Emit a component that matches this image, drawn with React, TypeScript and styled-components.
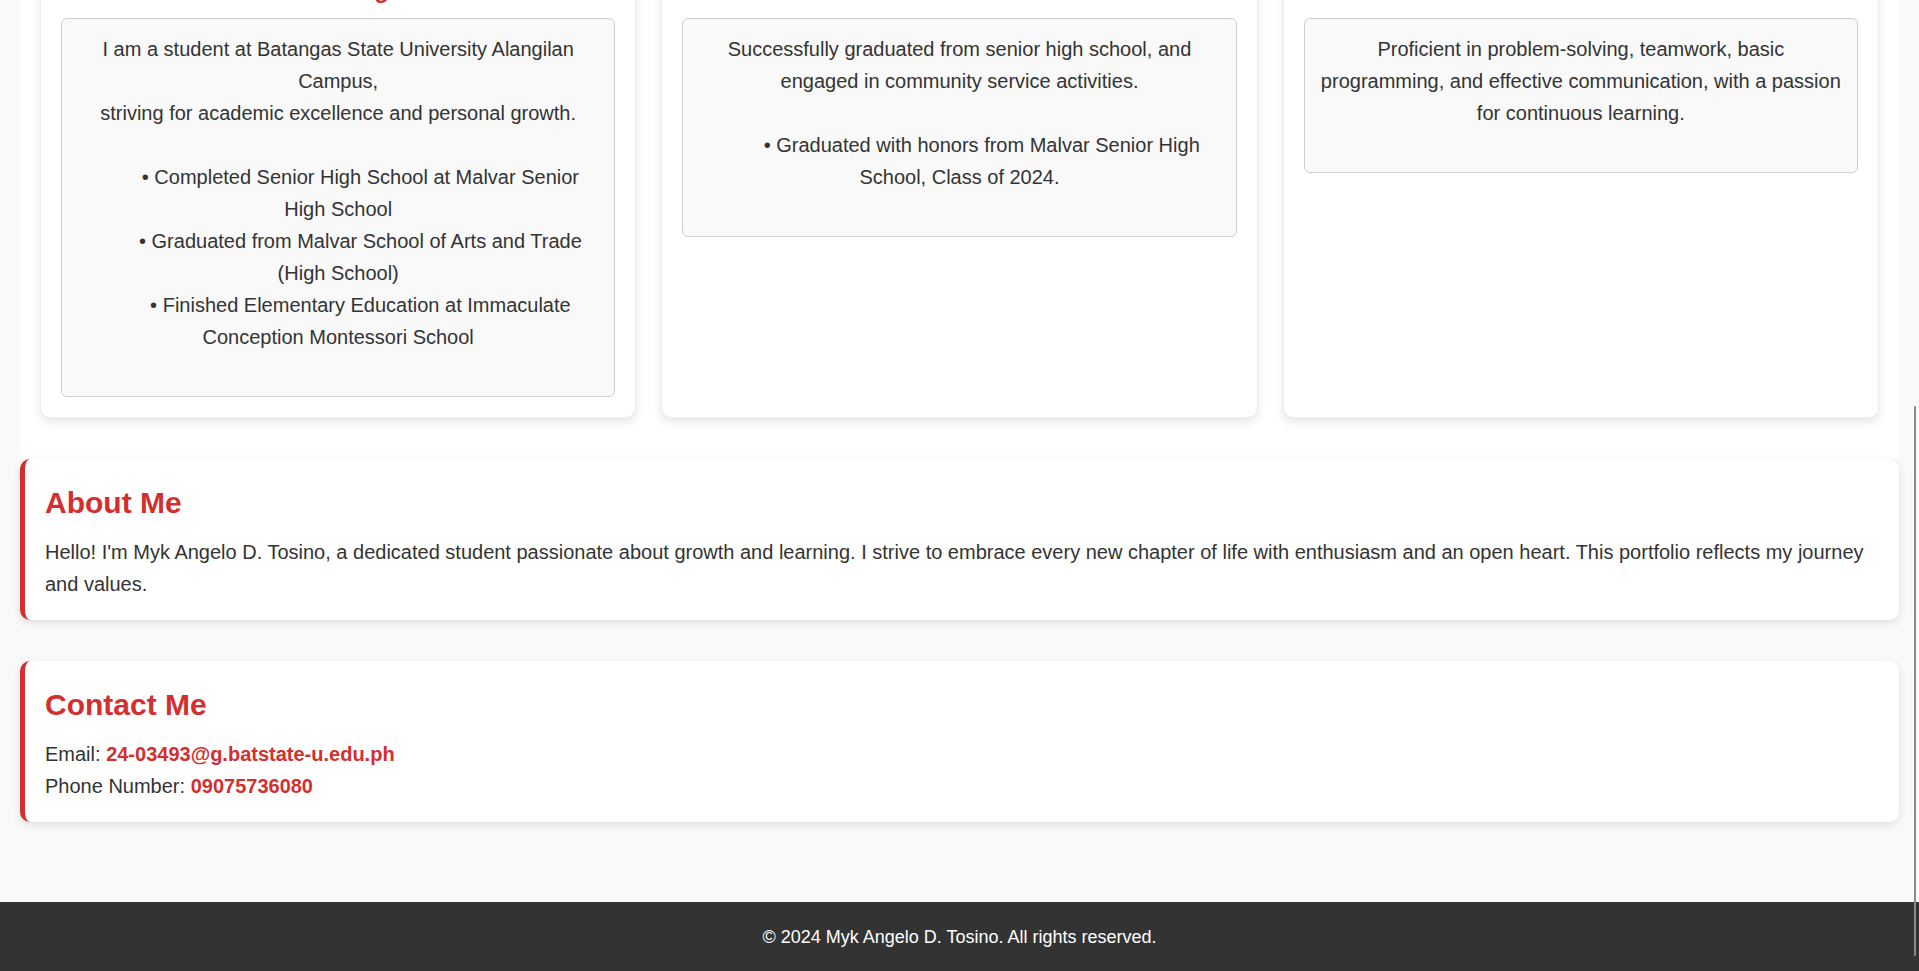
import React from "react";
import styled, { createGlobalStyle } from "styled-components";

const RED = "#d32f2f";

const Global = createGlobalStyle`
  html, body {
    margin: 0;
    padding: 0;
    height: 100%;
    overflow: hidden;
    background: #f9f9f9;
  }
  body {
    font-family: "Liberation Sans", Arial, sans-serif;
    color: #333;
    font-size: 20px;
    line-height: 32px;
  }
  * { box-sizing: border-box; }
`;

const Page = styled.div`
  margin-top: -66px;
  display: flex;
  flex-direction: column;
`;

const Main = styled.main`
  padding: 0 20px 80px;
  display: flex;
  flex-direction: column;
`;

const SkillsSection = styled.section`
  background: #fff;
  padding: 20px 20px 41px;
`;

const CardRow = styled.div`
  display: grid;
  grid-template-columns: repeat(3, 1fr);
  gap: 25px;
`;

const Card = styled.div`
  background: #fff;
  border: 1px solid #ececec;
  border-radius: 10px;
  box-shadow: 0 4px 10px rgba(0, 0, 0, 0.1);
  padding: 20px;
`;

const CardTitle = styled.h3`
  margin: 0 0 14px;
  color: ${RED};
  font-size: 24px;
  line-height: 29px;
  font-weight: 700;
  text-align: center;
`;

const InnerBox = styled.div`
  background: #f9f9f9;
  border: 1px solid #cfcfcf;
  border-radius: 6px;
  padding: 14px 15px 43px;
  text-align: center;
  font-size: 20px;
  line-height: 32px;
`;

const Panel = styled.section<{ $gap?: number }>`
  background: #fff;
  border-left: 5px solid ${RED};
  border-radius: 10px;
  box-shadow: 0 3px 8px rgba(0, 0, 0, 0.1);
  padding: 26px 20px 20px;
  margin-bottom: ${(p) => p.$gap ?? 0}px;
`;

const PanelTitle = styled.h2`
  margin: 0 0 15px;
  color: ${RED};
  font-size: 30px;
  line-height: 36px;
  font-weight: 700;
`;

const Text = styled.p`
  margin: 0;
  font-size: 20px;
  line-height: 32px;
`;

const Link = styled.a`
  color: ${RED};
  font-weight: 700;
  text-decoration: none;
`;

const Footer = styled.footer`
  background: #333;
  color: #fff;
  text-align: center;
  padding: 21px 20px 19px;
  font-size: 18px;
  line-height: 29px;
`;

const ScrollThumb = styled.div`
  position: fixed;
  right: 3px;
  top: 406px;
  width: 2px;
  height: 550px;
  background: #8a8a8a;
  border-radius: 1px;
`;

const IND = "\u00a0".repeat(8);

export default function App() {
  return (
    <>
      <Global />
      <Page>
        <Main>
          <SkillsSection>
            <CardRow>
              <Card>
                <CardTitle>Learning</CardTitle>
                <InnerBox>
                  I am a student at Batangas State University Alangilan Campus,
                  <br />
                  striving for academic excellence and personal growth.
                  <br />
                  <br />
                  {IND}• Completed Senior High School at Malvar Senior High School
                  <br />
                  {IND}• Graduated from Malvar School of Arts and Trade (High School)
                  <br />
                  {IND}• Finished Elementary Education at Immaculate Conception Montessori School
                </InnerBox>
              </Card>
              <Card>
                <CardTitle>Achievements</CardTitle>
                <InnerBox>
                  Successfully graduated from senior high school, and engaged in community service activities.
                  <br />
                  <br />
                  {IND}• Graduated with honors from Malvar Senior High School, Class of 2024.
                </InnerBox>
              </Card>
              <Card>
                <CardTitle>Skills</CardTitle>
                <InnerBox>
                  Proficient in problem-solving, teamwork, basic programming, and effective communication, with a passion for continuous learning.
                </InnerBox>
              </Card>
            </CardRow>
          </SkillsSection>

          <Panel $gap={41}>
            <PanelTitle>About Me</PanelTitle>
            <Text>
              Hello! I'm Myk Angelo D. Tosino, a dedicated student passionate about growth and learning. I strive to embrace every new chapter of life with enthusiasm and an open heart. This portfolio reflects my journey and values.
            </Text>
          </Panel>

          <Panel>
            <PanelTitle>Contact Me</PanelTitle>
            <Text>
              Email: <Link href="#">24-03493@g.batstate-u.edu.ph</Link>
            </Text>
            <Text>
              Phone Number: <Link href="#">09075736080</Link>
            </Text>
          </Panel>
        </Main>
        <Footer>© 2024 Myk Angelo D. Tosino. All rights reserved.</Footer>
      </Page>
      <ScrollThumb />
    </>
  );
}
